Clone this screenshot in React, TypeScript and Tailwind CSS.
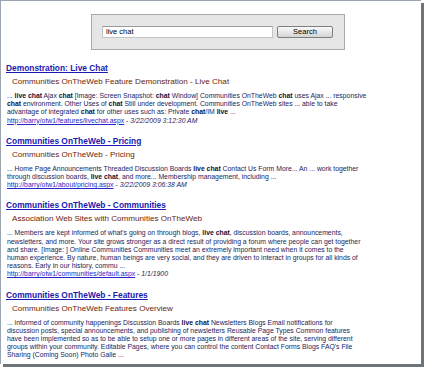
import React from 'react';

type Part = string | { b: string };

type Result = {
  title: string;
  sub: string;
  lines: Part[][];
  url: string;
  date: string;
};

const results: Result[] = [
  {
    title: 'Demonstration: Live Chat',
    sub: 'Communities OnTheWeb Feature Demonstration - Live Chat',
    lines: [
      ['... ', { b: 'live chat' }, ' Ajax ', { b: 'chat' }, ' [Image: Screen Snapshot: ', { b: 'chat' }, ' Window] Communities OnTheWeb ', { b: 'chat' }, ' uses Ajax ... responsive'],
      [{ b: 'chat' }, ' environment. Other Uses of ', { b: 'chat' }, ' Still under development. Communities OnTheWeb sites ... able to take'],
      ['advantage of integrated ', { b: 'chat' }, ' for other uses such as: Private ', { b: 'chat' }, '/IM ', { b: 'live' }, ' ...'],
    ],
    url: 'http://barry/otw1/features/livechat.aspx',
    date: '3/22/2009 3:12:30 AM',
  },
  {
    title: 'Communities OnTheWeb - Pricing',
    sub: 'Communities OnTheWeb - Pricing',
    lines: [
      ['... Home Page Announcements Threaded Discussion Boards ', { b: 'live chat' }, ' Contact Us Form More... An ... work together'],
      ['through discussion boards, ', { b: 'live chat' }, ', and more... Membership management, including ...'],
    ],
    url: 'http://barry/otw1/about/pricing.aspx',
    date: '3/22/2009 3:06:38 AM',
  },
  {
    title: 'Communities OnTheWeb - Communities',
    sub: 'Association Web Sites with Communities OnTheWeb',
    lines: [
      ["... Members are kept informed of what's going on through blogs, ", { b: 'live chat' }, ', discussion boards, announcements,'],
      ['newsletters, and more. Your site grows stronger as a direct result of providing a forum where people can get together'],
      ['and share. [Image: ] Online Communities Communities meet an extremely important need when it comes to the'],
      ['human experience. By nature, human beings are very social, and they are driven to interact in groups for all kinds of'],
      ['reasons. Early in our history, commu ...'],
    ],
    url: 'http://barry/otw1/communities/default.aspx',
    date: '1/1/1900',
  },
  {
    title: 'Communities OnTheWeb - Features',
    sub: 'Communities OnTheWeb Features Overview',
    lines: [
      ['... informed of community happenings Discussion Boards ', { b: 'live chat' }, ' Newsletters Blogs Email notifications for'],
      ['discussion posts, special announcements, and publishing of newsletters Reusable Page Types Common features'],
      ['have been implemented so as to be able to setup one or more pages in different areas of the site, serving different'],
      ["groups within your community. Editable Pages, where you can control the content Contact Forms Blogs FAQ's File"],
      ['Sharing (Coming Soon) Photo Galle ...'],
    ],
    url: '',
    date: '',
  },
];

const Line = ({ parts }: { parts: Part[] }) => (
  <div className="whitespace-nowrap">
    {parts.map((p, i) =>
      typeof p === 'string' ? <span key={i}>{p}</span> : <b key={i} className="font-bold text-[#10103a]">{p.b}</b>
    )}
  </div>
);

export default function App() {
  return (
    <div className="w-[427px] h-[370px] bg-white font-['Liberation_Sans',Arial,sans-serif]">
      <div className="w-[421px] h-[364px] bg-white border-l border-t border-[#9aa5b1] shadow-[3px_3px_0_#6b737b] overflow-hidden">
        <div className="pt-[13px] pl-[90px]">
          <div className="w-[254px] h-[36px] bg-[#e6e6e6] border border-[#a9a9a9] flex items-center pl-[10px] gap-[4px]">
            <div className="w-[171px] h-[12px] bg-white border border-[#c4c4c4] border-t-[#9a9a9a] text-[7.5px] leading-[10px] pl-[3px] text-black">
              live chat
            </div>
            <div className="w-[56px] h-[12px] rounded-[2px] border border-[#7e7e7e] bg-gradient-to-b from-[#fafafa] to-[#d4d4d4] text-[7.5px] leading-[10px] text-center text-black">
              Search
            </div>
          </div>
        </div>

        <div className="pl-[5px] mt-[11px]">
          {results.map((r, i) => (
            <div key={i} className="mb-[9px]">
              <div className="text-[8.4px] leading-[14px] font-bold text-[#1a1ab0] underline">{r.title}</div>
              <div className="text-[8.1px] leading-[14px] pl-[6px] text-[#6a1c08]">{r.sub}</div>
              <div className="pt-[3px] pl-[1px] text-[6.85px] leading-[8.2px] text-[#1c1c5c]">
                {r.lines.map((l, j) => (
                  <Line key={j} parts={l} />
                ))}
                {r.url && (
                  <div className="whitespace-nowrap">
                    <span className="text-[#2626c8] underline">{r.url}</span>
                    <span> - </span>
                    <i>{r.date}</i>
                  </div>
                )}
              </div>
            </div>
          ))}
        </div>
      </div>
    </div>
  );
}
